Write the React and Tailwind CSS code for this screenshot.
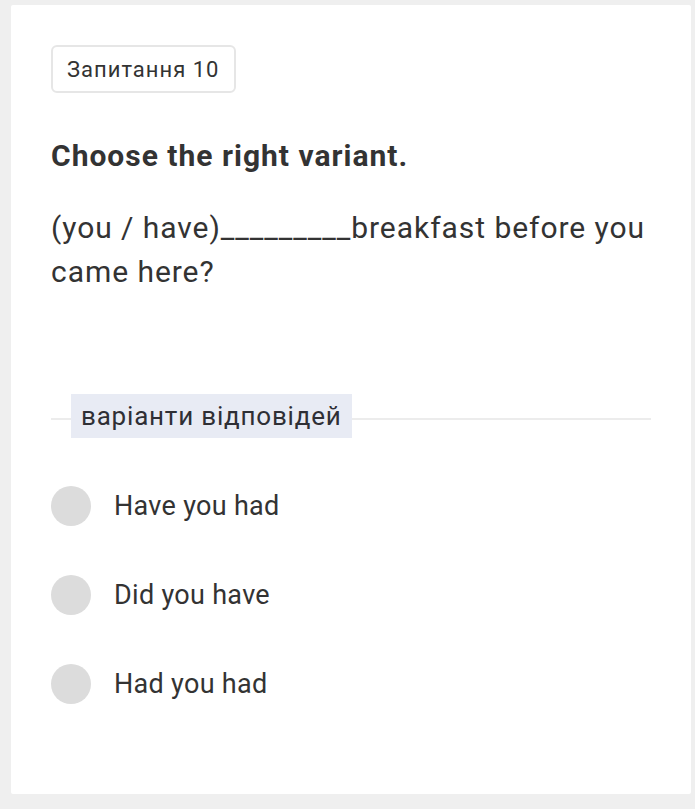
import React from 'react';

const OPTIONS = ['Have you had', 'Did you have', 'Had you had'];

export default function App() {
  return (
    <div className="min-h-[809px] w-[695px] bg-[#efefef] pl-[11px] pr-[4px] pt-[5px] pb-[15px]" style={{ fontFamily: 'Roboto, sans-serif' }}>
      <div className="h-[789px] bg-white rounded-[2px] px-[40px] pt-[40px] text-[#333333]">
        {/* question number */}
        <div className="inline-flex h-[48px] items-center rounded-[6px] border-2 border-[#e6e6e6] pl-[14px] pr-[15px] text-[22px] tracking-[1px] text-[#333]">
          Запитання 10
        </div>

        <h2 className="mt-[45px] text-[30px] font-bold leading-[36px] tracking-[1px]">Choose the right variant.</h2>

        <p className="mt-[32px] -mr-[10px] text-[30px] leading-[44px] tracking-[0.95px]">
          (you / have)_________breakfast before you came here?
        </p>

        {/* answers divider */}
        <div className="relative mt-[100px] flex h-[44px] items-center">
          <div className="absolute left-0 right-0 top-[24px] h-[2px] bg-[#ececec]" />
          <span className="relative ml-[20px] flex h-[44px] items-center bg-[#e8ebf4] px-[10px] text-[26px] tracking-[0.8px] text-[#2f2f35]">
            варіанти відповідей
          </span>
        </div>

        <div className="mt-[48px] flex flex-col gap-[49px]">
          {OPTIONS.map((opt) => (
            <label key={opt} className="flex h-[40px] items-center gap-[23px] cursor-pointer">
              <span className="h-[40px] w-[40px] rounded-full bg-[#dcdcdc]" />
              <span className="text-[27px] tracking-[0.3px]">{opt}</span>
            </label>
          ))}
        </div>
      </div>
    </div>
  );
}
